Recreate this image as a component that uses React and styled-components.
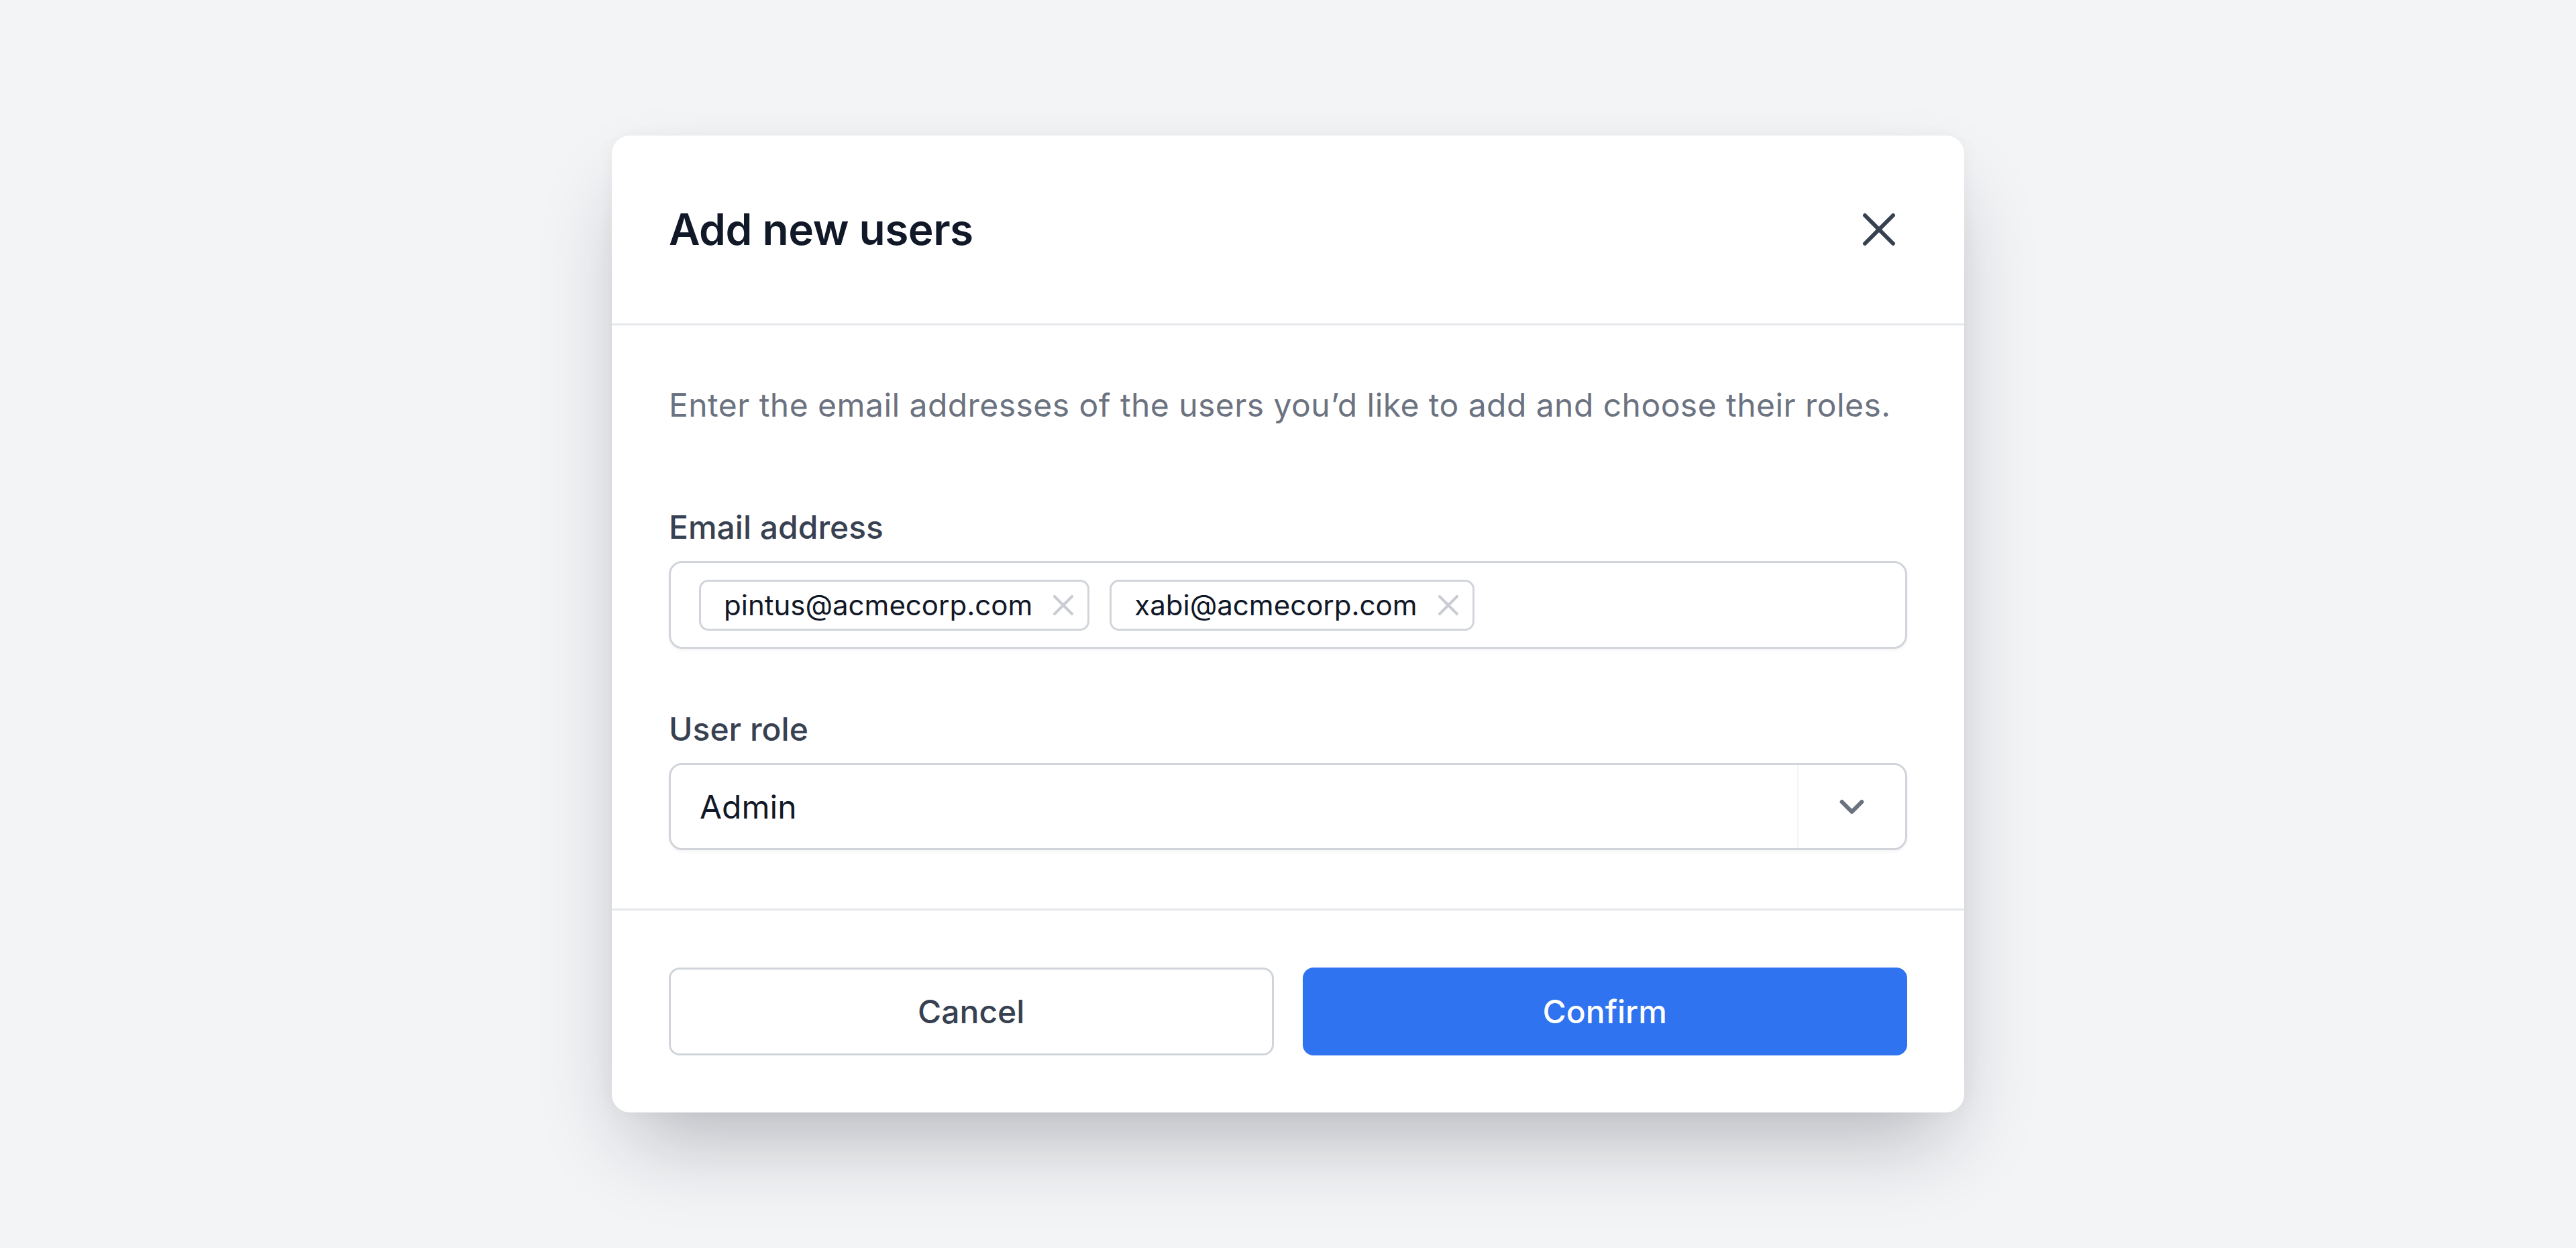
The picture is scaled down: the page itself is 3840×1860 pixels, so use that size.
import styled, { createGlobalStyle } from "styled-components";
import { X, ChevronDown } from "lucide-react";

const GlobalStyle = createGlobalStyle`
  html, body {
    margin: 0;
    padding: 0;
    background: #f3f4f6;
  }
  body {
    font-family: Inter, "Noto Sans", "Liberation Sans", sans-serif;
    -webkit-font-smoothing: antialiased;
  }
  * { box-sizing: border-box; }
`;

const emails = ["pintus@acmecorp.com", "xabi@acmecorp.com"];

const App = () => {
    return (
        <>
            <GlobalStyle />
            <Page>
                <Modal>
                    <Header>
                        <Title>Add new users</Title>
                        <CloseButton aria-label="Close">
                            <X size={84} strokeWidth={1.7} color="#374151" />
                        </CloseButton>
                    </Header>
                    <Body>
                        <Description>
                            Enter the email addresses of the users you’d like to add and choose their roles.
                        </Description>
                        <Field>
                            <Label>Email address</Label>
                            <TagInput>
                                {emails.map((email) => (
                                    <Chip key={email}>
                                        <span>{email}</span>
                                        <ChipRemove>
                                            <X size={52} strokeWidth={1.85} color="#c9ccd2" />
                                        </ChipRemove>
                                    </Chip>
                                ))}
                            </TagInput>
                        </Field>
                        <Field $last>
                            <Label>User role</Label>
                            <Select>
                                <SelectValue>Admin</SelectValue>
                                <SelectArrow>
                                    <ChevronDown size={59} strokeWidth={2.5} color="#6b7280" />
                                </SelectArrow>
                            </Select>
                        </Field>
                    </Body>
                    <Footer>
                        <Button>Cancel</Button>
                        <Button $primary>Confirm</Button>
                    </Footer>
                </Modal>
            </Page>
        </>
    );
};
export default App;

const Page = styled.div`
    min-height: 100vh;
    display: flex;
    align-items: center;
    justify-content: center;
`;

const Modal = styled.div`
    width: 2016px;
    background: #ffffff;
    border-radius: 27px;
    box-shadow: 0 64px 120px -28px rgba(17, 24, 39, 0.28), 0 0 24px rgba(17, 24, 39, 0.04);
    overflow: hidden;
`;

const Header = styled.div`
    display: flex;
    align-items: center;
    justify-content: space-between;
    padding: 98px 85px;
    border-bottom: 3px solid #e5e7eb;
`;

const Title = styled.h2`
    margin: 0;
    font-size: 64px;
    line-height: 80px;
    font-weight: 600;
    color: #111827;
    letter-spacing: -0.5px;
`;

const CloseButton = styled.button`
    display: flex;
    width: 84px;
    height: 84px;
    padding: 0;
    border: none;
    background: none;
    cursor: pointer;
`;

const Body = styled.div`
    padding: 83px 85px 87px;
`;

const Description = styled.p`
    margin: 0 0 114px;
    font-size: 48px;
    line-height: 72px;
    letter-spacing: 0.45px;
    color: #6b7280;
`;

const Field = styled.div`
    display: flex;
    flex-direction: column;
    gap: 18px;
    margin-bottom: ${(p) => (p.$last ? "0" : "88px")};
`;

const Label = styled.label`
    font-size: 48px;
    line-height: 64px;
    font-weight: 500;
    color: #374151;
`;

const TagInput = styled.div`
    display: flex;
    align-items: center;
    gap: 30px;
    height: 131px;
    padding: 0 42px;
    border: 3px solid #d1d5db;
    border-radius: 20px;
    box-shadow: 0 3px 5px rgba(0, 0, 0, 0.04);
`;

const Chip = styled.div`
    display: flex;
    align-items: center;
    gap: 20px;
    height: 76px;
    padding: 0 10px 0 34px;
    border: 3px solid #d1d5db;
    border-radius: 14px;
    font-size: 42px;
    color: #111827;
`;

const ChipRemove = styled.span`
    display: flex;
`;

const Select = styled.div`
    display: flex;
    align-items: stretch;
    height: 130px;
    border: 3px solid #d1d5db;
    border-radius: 20px;
    box-shadow: 0 3px 5px rgba(0, 0, 0, 0.04);
`;

const SelectValue = styled.div`
    flex: 1;
    display: flex;
    align-items: center;
    padding-left: 43px;
    font-size: 48px;
    color: #111827;
`;

const SelectArrow = styled.div`
    width: 161px;
    display: flex;
    align-items: center;
    justify-content: center;
    border-left: 2px solid #f3f4f6;
`;

const Footer = styled.div`
    display: grid;
    grid-template-columns: 1fr 1fr;
    gap: 43px;
    padding: 85px;
    border-top: 3px solid #e5e7eb;
`;

const Button = styled.button`
    height: 131px;
    border-radius: 16px;
    font-family: inherit;
    font-size: 48px;
    font-weight: 500;
    cursor: pointer;
    color: ${(p) => (p.$primary ? "#ffffff" : "#374151")};
    background: ${(p) => (p.$primary ? "#2f73f0" : "#ffffff")};
    border: ${(p) => (p.$primary ? "none" : "3px solid #d1d5db")};
`;
